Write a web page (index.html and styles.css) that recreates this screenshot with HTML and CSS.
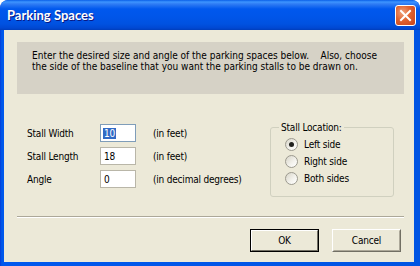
FILE: index.html
```html
<!DOCTYPE html>
<html>
<head>
<meta charset="utf-8">
<link rel="stylesheet" href="styles.css">
</head>
<body>
<div class="window">
  <div class="titlebar">
    <span class="title">Parking Spaces</span>
    <span class="close" aria-label="Close">
      <svg width="21" height="21" viewBox="0 0 21 21">
        <path d="M6 6 L15 15 M15 6 L6 15" stroke="#fff" stroke-width="2" stroke-linecap="square"/>
      </svg>
    </span>
  </div>
  <div class="client">
    <div class="info">
      <p>Enter the desired size and angle of the parking spaces below.&nbsp;&nbsp;&nbsp; Also, choose</p>
      <p>the side of the baseline that you want the parking stalls to be drawn on.</p>
    </div>
    <div class="middle">
      <div class="fields">
        <label class="lbl">Stall Width</label>
        <span class="input focused"><span class="sel">10</span></span>
        <span class="unit">(in feet)</span>
        <label class="lbl">Stall Length</label>
        <span class="input">18</span>
        <span class="unit">(in feet)</span>
        <label class="lbl">Angle</label>
        <span class="input">0</span>
        <span class="unit">(in decimal degrees)</span>
      </div>
      <fieldset class="group">
        <legend>Stall Location:</legend>
        <div class="radio"><span class="dot checked"></span>Left side</div>
        <div class="radio"><span class="dot"></span>Right side</div>
        <div class="radio"><span class="dot"></span>Both sides</div>
      </fieldset>
    </div>
    <div class="sep"></div>
    <div class="buttons">
      <span class="btn default"><span>OK</span></span>
      <span class="btn"><span>Cancel</span></span>
    </div>
  </div>
</div>
</body>
</html>
```
FILE: styles.css
```css
html, body {
  margin: 0;
  padding: 0;
  background: #ffffff;
}
.window {
  width: 420px;
  height: 266px;
  box-sizing: border-box;
  border-radius: 8px 8px 0 0;
  background: linear-gradient(90deg, #0831d9 0, #0054e3 1px, #0058ee 3px, #0054e3 100%);
  display: flex;
  flex-direction: column;
  padding: 0 6px 4px 4px;
  overflow: hidden;
  font-family: "DejaVu Sans Condensed", "DejaVu Sans", sans-serif;
  font-size: 10px;
  letter-spacing: -0.2px;
  color: #000;
}
.titlebar {
  height: 30px;
  margin: 0 -6px 0 -4px;
  padding: 0 4px 0 7px;
  display: flex;
  align-items: center;
  justify-content: space-between;
  background: linear-gradient(180deg, #0a5fe8 0, #3d95ff 2px, #2f7cf4 4px, #0058ee 9px, #0055e8 18px, #0052e0 24px, #0048d3 28px, #003dbb 30px);
  border-radius: 8px 8px 0 0;
}
.title {
  font-family: Lato, "Liberation Sans", sans-serif;
  font-weight: bold;
  font-size: 13px;
  letter-spacing: 0;
  color: #fff;
  text-shadow: 1px 1px 0 #0a1883;
}
.close {
  width: 21px;
  height: 21px;
  box-sizing: border-box;
  border: 1px solid #fff;
  border-radius: 3px;
  background: radial-gradient(circle at 35% 35%, #f0a37e 0, #e0622f 45%, #c8421a 100%);
  display: flex;
}
.close svg { display: block; margin: -1px; }
.client {
  flex: 1;
  background: #ece9d8;
  display: flex;
  flex-direction: column;
  padding: 12px 10px 0 13px;
}
.info {
  background: #d6d2c6;
  height: 52px;
  box-sizing: border-box;
  padding: 8px 0 0 15px;
}
.info p {
  margin: 0;
  line-height: 11px;
  white-space: nowrap;
  letter-spacing: 0;
}
.middle {
  display: flex;
  margin-top: 28px;
}
.fields {
  display: grid;
  grid-template-columns: 73px 53px auto;
  grid-auto-rows: 20px;
  row-gap: 3px;
  align-items: center;
  padding-left: 10px;
  margin-top: 1px;
}
.input {
  width: 36px;
  height: 18px;
  box-sizing: border-box;
  border: 1px solid #b9b6a8;
  background: #fff;
  padding: 2px 0 0 3px;
  line-height: 13px;
}
.input.focused {
  border-color: #7f9db9;
  padding-left: 2px;
}
.sel {
  background: #316ac5;
  color: #fff;
  padding: 0 1px;
}
.group {
  margin: 0 10px 0 auto;
  width: 124px;
  height: 75px;
  box-sizing: border-box;
  border: 1px solid #d0d0bf;
  border-radius: 3px;
  padding: 3px 0 0 14px;
}
.group legend {
  padding: 0 2px;
  margin-left: -6px;
  line-height: 11px;
}
.radio {
  display: flex;
  align-items: center;
  height: 17px;
}
.dot {
  width: 11px;
  height: 11px;
  border-radius: 50%;
  border: 1px solid #9c9a8f;
  background: linear-gradient(135deg, #d8d5c8 0, #f4f3ee 60%, #ffffff 100%);
  margin-right: 6px;
  position: relative;
}
.dot.checked::after {
  content: "";
  position: absolute;
  left: 3px;
  top: 3px;
  width: 5px;
  height: 5px;
  border-radius: 50%;
  background: #21211e;
}
.sep {
  margin-top: auto;
  height: 1px;
  border-top: 1px solid #aca899;
  background: #fff;
  margin-bottom: 11px;
}
.buttons {
  display: flex;
  justify-content: flex-end;
  gap: 13px;
  padding-right: 3px;
  margin-bottom: 10px;
}
.btn {
  width: 69px;
  height: 23px;
  box-sizing: border-box;
  border: 1px solid;
  border-color: #fff #716f64 #716f64 #fff;
  display: flex;
}
.btn span {
  flex: 1;
  display: flex;
  align-items: center;
  justify-content: center;
  border: 1px solid;
  border-color: #ece9d8 #aca899 #aca899 #ece9d8;
}
.btn.default {
  border: 1px solid #000;
}
.btn.default span {
  border-color: #fff #716f64 #716f64 #fff;
}
```
